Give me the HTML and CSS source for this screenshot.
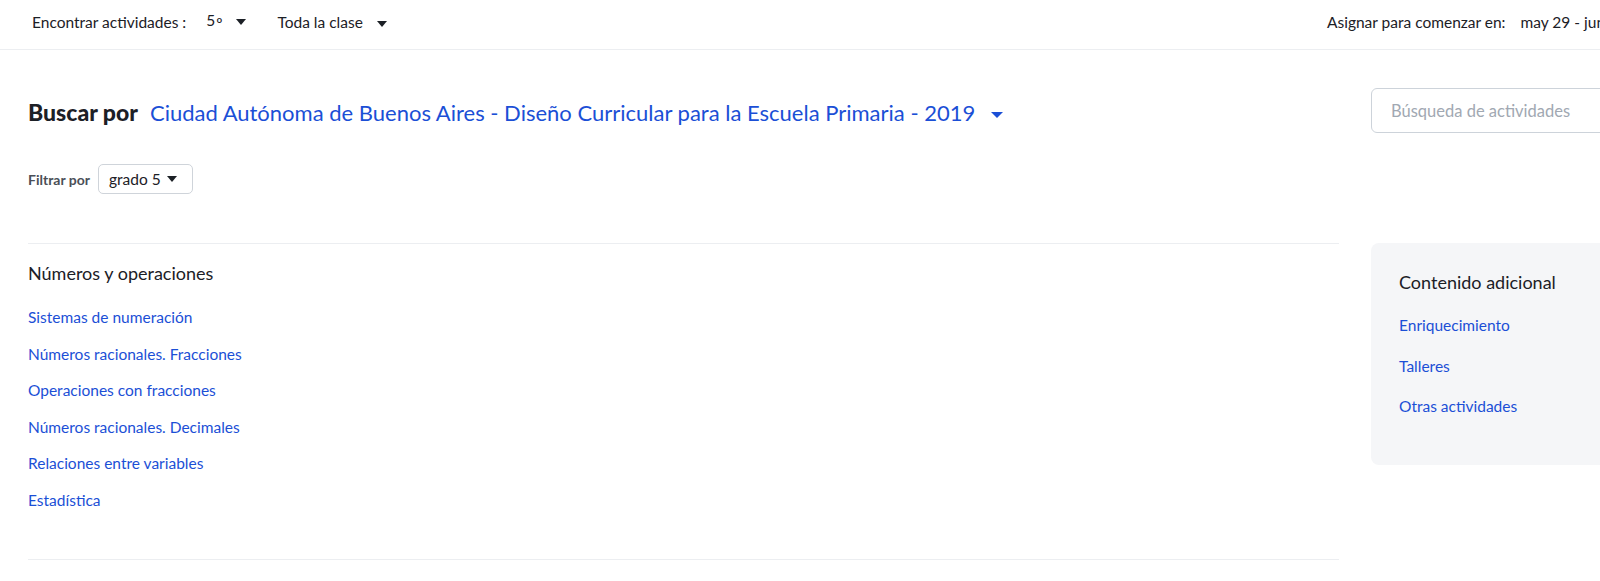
FILE: index.html
```html
<!DOCTYPE html>
<html lang="es">
<head>
    <meta charset="UTF-8">
    <meta name="viewport" content="width=device-width, initial-scale=1.0">
    <title>Buscar actividades</title>
    <link rel="stylesheet" href="styles.css">
</head>
<body>

<div class="page">
    <header class="topbar">
        <div class="topbar-group">
            <span class="topbar-label">Encontrar actividades :</span>
            <span class="topbar-select">5<span class="ordinal">º</span> <span class="caret"></span></span>
            <span class="topbar-select">Toda la clase <span class="caret"></span></span>
        </div>
        <div class="topbar-group topbar-right">
            <span class="topbar-label">Asignar para comenzar en:</span>
            <span class="topbar-date">may 29 - jun 4</span>
        </div>
    </header>

    <div class="content">
        <div class="main-col">
            <div class="search-head">
                <h1>Buscar por</h1>
                <a href="#" class="curriculum">Ciudad Autónoma de Buenos Aires - Diseño Curricular para la Escuela Primaria - 2019 <span class="caret caret-blue"></span></a>
            </div>

            <div class="filter-row">
                <span class="filter-label">Filtrar por</span>
                <button type="button" class="filter-select">grado 5 <span class="caret caret-small"></span></button>
            </div>

            <section class="topic">
                <h2>Números y operaciones</h2>
                <ul class="topic-links">
                    <li><a href="#">Sistemas de numeración</a></li>
                    <li><a href="#">Números racionales. Fracciones</a></li>
                    <li><a href="#">Operaciones con fracciones</a></li>
                    <li><a href="#">Números racionales. Decimales</a></li>
                    <li><a href="#">Relaciones entre variables</a></li>
                    <li><a href="#">Estadística</a></li>
                </ul>
            </section>
        </div>

        <aside class="side-col">
            <input type="text" class="search-input" placeholder="Búsqueda de actividades">

            <div class="extra-box">
                <h3>Contenido adicional</h3>
                <ul class="extra-links">
                    <li><a href="#">Enriquecimiento</a></li>
                    <li><a href="#">Talleres</a></li>
                    <li><a href="#">Otras actividades</a></li>
                </ul>
            </div>
        </aside>
    </div>
</div>

</body>
</html>
```

FILE: styles.css
```css
html, body {
    margin: 0;
    padding: 0;
    overflow: hidden;
    background-color: white;
}

body {
    font-family: Lato, "Open Sans", sans-serif;
    color: #1c2026;
}

.page {
    width: 1650px;
}

a {
    color: #1b4fd6;
    text-decoration: none;
}

.caret {
    display: inline-block;
    width: 0;
    height: 0;
    border-left: 5px solid transparent;
    border-right: 5px solid transparent;
    border-top: 6px solid #1c2026;
    vertical-align: middle;
    margin-left: 10px;
}

.caret-blue {
    border-top-color: #1b4fd6;
    margin-left: 10px;
    border-left-width: 6px;
    border-right-width: 6px;
}

.caret-small {
    margin-left: 6px;
}

/* top bar */
.topbar {
    display: flex;
    justify-content: space-between;
    align-items: center;
    height: 43px;
    padding: 0 32px 6px;
    border-bottom: 1px solid #eceef1;
    font-size: 15.5px;
}

.topbar-group {
    display: flex;
    align-items: center;
    gap: 31px;
}

.topbar-label {
    margin-right: -11px;
}

.ordinal {
    vertical-align: -0.2em;
    margin-left: 1px;
}

.topbar-right {
    gap: 30px;
}

.topbar-right .topbar-label {
    margin-right: -15px;
}

/* content */
.content {
    display: flex;
    gap: 32px;
    padding: 0 28px;
}

.main-col {
    width: 1311px;
    flex-shrink: 0;
}

.search-head {
    display: flex;
    align-items: baseline;
    gap: 12px;
    margin-top: 48px;
}

h1 {
    font-size: 23px;
    font-weight: 900;
    margin: 0;
}

.curriculum {
    font-size: 22px;
}

.filter-row {
    display: flex;
    align-items: center;
    gap: 8px;
    margin-top: 38px;
}

.filter-label {
    font-size: 14px;
    font-weight: 700;
    color: #4a4f57;
}

.filter-select {
    font-family: inherit;
    font-size: 15.5px;
    color: #1c2026;
    background: white;
    border: 1px solid #cfd4da;
    border-radius: 5px;
    height: 30px;
    padding: 0 15px 0 10px;
    display: flex;
    align-items: center;
}

.topic {
    margin-top: 49px;
    border-top: 1px solid #eceef1;
    border-bottom: 1px solid #eceef1;
    padding: 18px 0 41px;
}

h2 {
    font-size: 18px;
    font-weight: 400;
    margin: 0 0 15px;
}

.topic-links {
    list-style: none;
    margin: 0;
    padding: 0;
}

.topic-links li {
    font-size: 15.5px;
    line-height: 36.5px;
}

/* side column */
.side-col {
    width: 300px;
    flex-shrink: 0;
    padding-top: 38px;
}

.search-input {
    box-sizing: border-box;
    width: 100%;
    height: 45px;
    border: 1px solid #cdd3da;
    border-radius: 6px;
    padding: 0 19px;
    font-family: inherit;
    font-size: 16.5px;
    outline: none;
}

.search-input::placeholder {
    color: #a1a8b2;
}

.extra-box {
    margin-top: 110px;
    background-color: #f5f6f8;
    border-radius: 8px;
    height: 222px;
    box-sizing: border-box;
    padding: 28px 28px;
}

h3 {
    font-size: 18px;
    font-weight: 400;
    margin: 0 0 12px;
}

.extra-links {
    list-style: none;
    margin: 0;
    padding: 0;
}

.extra-links li {
    font-size: 15.5px;
    line-height: 40.5px;
}
```
